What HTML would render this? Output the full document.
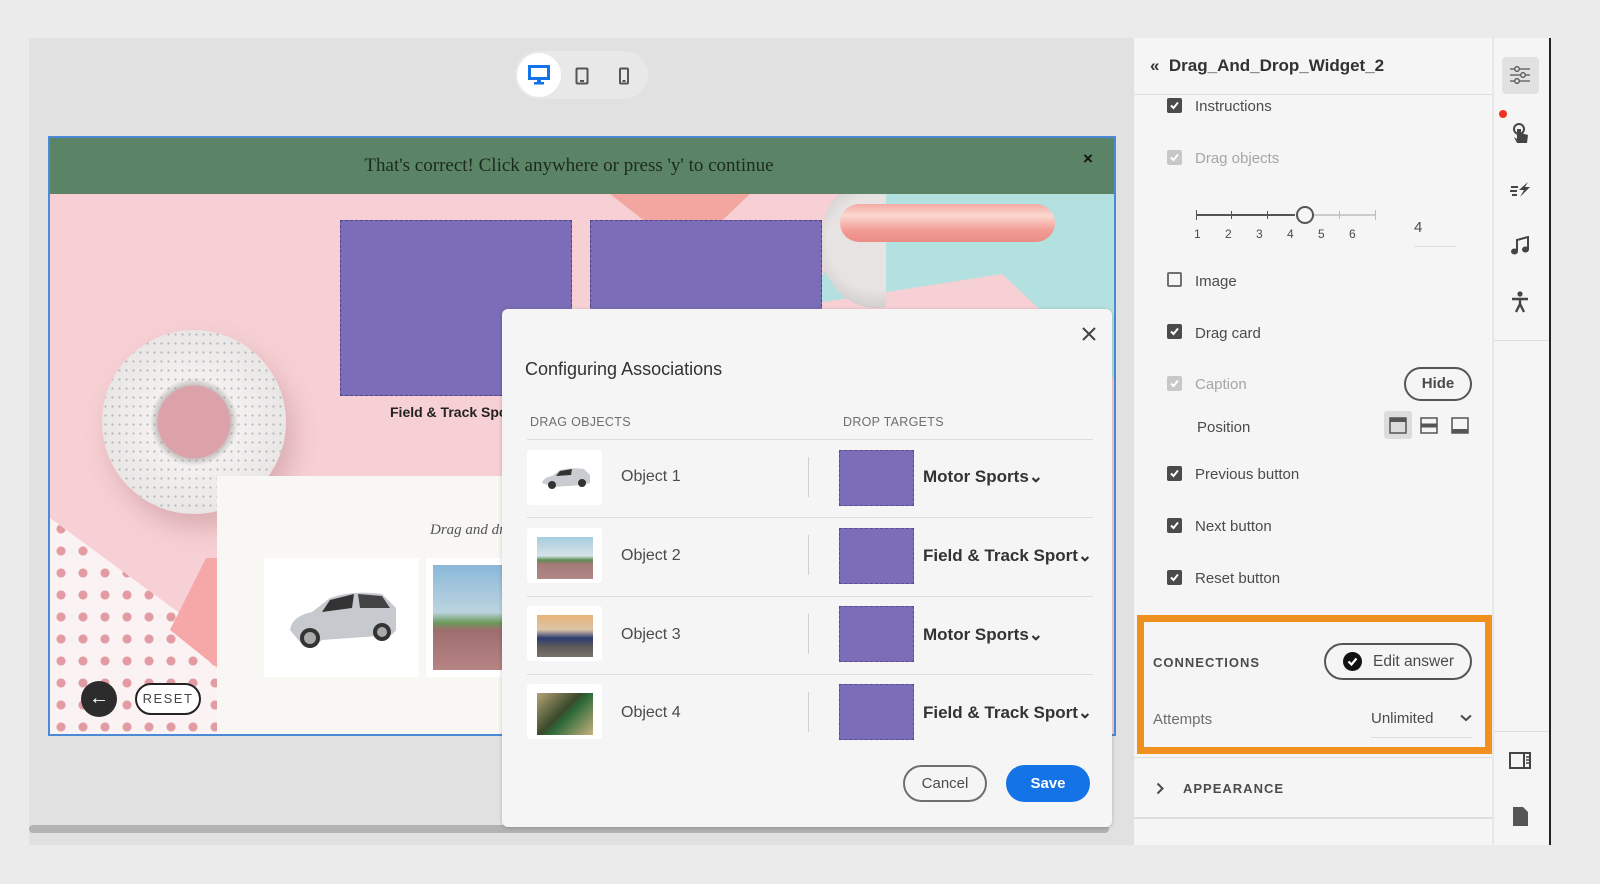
<!DOCTYPE html>
<html><head><meta charset="utf-8"><style>
*{box-sizing:border-box;margin:0;padding:0}
body{width:1600px;height:884px;background:#ebebeb;position:relative;overflow:hidden;font-family:"Liberation Sans",sans-serif;color:#323232}
.abs{position:absolute}
.sb{font-family:"Liberation Sans",sans-serif;font-size:15px;color:#4b4b4b}
.cb{position:absolute;width:15px;height:15px;border-radius:2px;background:#4b4b4b}
.cb svg{position:absolute;left:2px;top:2px}
.cb.dis{background:#c8c8c8}
.cb.off{background:transparent;border:2px solid #707070}
.row{position:absolute;left:527px;width:566px;height:1px;background:#dcdcdc}
.thumb{position:absolute;left:527px;width:75px;height:55px;background:#fff;border-radius:3px}
.objt{position:absolute;left:621px;font-size:16px;color:#4b4b4b}
.vs{position:absolute;left:808px;width:1px;height:40px;background:#d0d0d0}
.tgt{position:absolute;left:839px;width:75px;height:56px;background:#7b6db7;border:1px dashed #5a4c92}
.tgtt{position:absolute;left:923px;font-size:17px;font-weight:bold;color:#333}
</style></head><body>
<div class="abs" style="left:29px;top:38px;width:1105px;height:807px;background:#e1e1e1"></div>
<div class="abs" style="left:515px;top:51px;width:133px;height:48px;border-radius:24px;background:#e8e8e8"></div>
<div class="abs" style="left:517px;top:53px;width:44px;height:44px;border-radius:22px;background:#fff"></div>
<svg class="abs" style="left:528px;top:65px" width="22" height="20" viewBox="0 0 22 20"><rect x="1.5" y="1.5" width="19" height="12" fill="none" stroke="#1473e6" stroke-width="3"/><rect x="9" y="14" width="4" height="3" fill="#1473e6"/><rect x="6" y="17" width="10" height="2.5" fill="#1473e6"/></svg>
<svg class="abs" style="left:575px;top:67px" width="14" height="18" viewBox="0 0 14 18"><rect x="1.5" y="1.5" width="11" height="15" rx="1" fill="none" stroke="#555" stroke-width="2"/><rect x="5" y="13" width="4" height="2" fill="#555"/></svg>
<svg class="abs" style="left:619px;top:67px" width="10" height="18" viewBox="0 0 10 18"><rect x="1" y="1.5" width="8" height="15" rx="1" fill="none" stroke="#555" stroke-width="2"/><rect x="3.5" y="13" width="3" height="2" fill="#555"/></svg>

<div class="abs" style="left:48px;top:136px;width:1068px;height:600px;border:2px solid #4a8ad8;background:#f6d0d4;overflow:hidden">
  <div class="abs" style="left:760px;top:56px;width:320px;height:200px;background:#b3e1df;clip-path:polygon(15% 0,100% 0,100% 100%,60% 40%,0 55%)"></div>
  <div class="abs" style="left:560px;top:56px;width:140px;height:60px;background:#f3a59f;clip-path:polygon(0 0,100% 0,55% 100%)"></div>
  <div class="abs" style="left:770px;top:40px;width:110px;height:130px;border-radius:50%;background:radial-gradient(circle,#e7e3e3 55%,#bdb8b8);clip-path:inset(0 40% 0 0)"></div>
  <div class="abs" style="left:790px;top:66px;width:215px;height:38px;border-radius:19px;background:linear-gradient(#f3aaa4,#fbd8d0 30%,#f29b94 70%,#ea8c86)"></div>
  <div class="abs" style="left:52px;top:192px;width:184px;height:184px;border-radius:50%;background:radial-gradient(circle,#dba3a9 0 36px,#c9c4c4 37px,#f3f0f0 44px,#e8e5e5 75%,#bfbaba 92px);box-shadow:8px 14px 24px rgba(170,110,115,.35)"></div>
  <div class="abs" style="left:52px;top:192px;width:184px;height:184px;border-radius:50%;background-image:radial-gradient(circle,#888 0.8px,transparent 1.4px);background-size:7px 9px;opacity:.5;-webkit-mask:radial-gradient(circle,transparent 37px,#000 38px);mask:radial-gradient(circle,transparent 37px,#000 38px)"></div>
  <div class="abs" style="left:0;top:380px;width:180px;height:220px;background-color:#fbf2f3;background-image:radial-gradient(circle,#e29aa3 4px,transparent 5px);background-size:22px 22px;clip-path:polygon(0 0,100% 60%,100% 100%,0 100%)"></div>
  <div class="abs" style="left:120px;top:420px;width:60px;height:120px;background:#f6a8a8;clip-path:polygon(60% 0,100% 0,100% 100%,0 60%)"></div>
  <div class="abs" style="left:0;top:0;width:1068px;height:56px;background:#5a8465;font-family:'Liberation Serif',serif;font-size:19px;color:#1c2a1f;text-align:center;line-height:56px;padding-right:30px">That's correct! Click anywhere or press 'y' to continue</div>
  <div class="abs" style="left:1033px;top:11px;font-size:17px;color:#111;font-weight:bold">×</div>
  <div class="abs" style="left:290px;top:82px;width:232px;height:176px;background:#7b6db7;border:1px dashed #4f4286"></div>
  <div class="abs" style="left:540px;top:82px;width:232px;height:176px;background:#7b6db7;border:1px dashed #4f4286"></div>
  <div class="abs" style="left:340px;top:266px;font-size:14px;font-weight:bold;color:#222">Field &amp; Track Sports</div>
  <div class="abs" style="left:167px;top:338px;width:400px;height:262px;background:#f8f7f4"></div>
  <div class="abs" style="left:380px;top:384px;font-family:'Liberation Serif',serif;font-style:italic;font-size:15px;color:#555">Drag and drop</div>
  <div class="abs" style="left:214px;top:420px;width:155px;height:119px;background:#fff"></div>
  <svg class="abs" style="left:232px;top:440px" width="120" height="80" viewBox="0 0 120 80"><path d="M8 52 Q10 38 30 34 L48 20 Q70 12 100 16 L114 30 L114 52 Q110 60 96 58 L40 62 Q30 72 18 64 Z" fill="#c6c9ce"/><path d="M48 22 L72 16 L70 30 L40 34 Z" fill="#333"/><path d="M76 16 L100 18 L108 30 L78 30 Z" fill="#444"/><circle cx="28" cy="60" r="10" fill="#333"/><circle cx="28" cy="60" r="6" fill="#aaa"/><circle cx="100" cy="54" r="9" fill="#333"/><circle cx="100" cy="54" r="5" fill="#aaa"/></svg>
  <div class="abs" style="left:376px;top:420px;width:80px;height:119px;background:#fff"></div>
  <div class="abs" style="left:383px;top:427px;width:80px;height:105px;background:linear-gradient(#8ab8d8 0,#bcd4e0 45%,#6a9a5a 55%,#9e6e6e 62%,#b78484)"></div>
  <div class="abs" style="left:31px;top:543px;width:36px;height:36px;border-radius:50%;background:#2c2c2c;color:#fff;font-size:20px;text-align:center;line-height:34px">←</div>
  <div class="abs" style="left:85px;top:545px;width:66px;height:32px;border-radius:16px;border:2px solid #222;background:#fff;font-size:13px;letter-spacing:1.5px;text-align:center;line-height:28px;color:#444">RESET</div>
</div>

<div class="abs" style="left:29px;top:825px;width:1080px;height:8px;border-radius:4px;background:#b3b3b3"></div>

<div class="abs" style="left:502px;top:309px;width:610px;height:518px;background:#f5f5f5;border-radius:6px;box-shadow:0 1px 4px rgba(0,0,0,.2)"></div>
<svg class="abs" style="left:1081px;top:326px" width="16" height="16" viewBox="0 0 16 16"><path d="M2 2L14 14M14 2L2 14" stroke="#444" stroke-width="2"/></svg>
<div class="abs" style="left:525px;top:359px;font-size:18px;color:#323232">Configuring Associations</div>
<div class="abs" style="left:530px;top:415px;font-size:12.5px;color:#6e6e6e;letter-spacing:.3px">DRAG OBJECTS</div>
<div class="abs" style="left:843px;top:415px;font-size:12.5px;color:#6e6e6e;letter-spacing:.3px">DROP TARGETS</div>
<div class="row" style="top:439px"></div>
<div class="row" style="top:517px"></div>
<div class="row" style="top:596px"></div>
<div class="row" style="top:674px"></div>

<div class="thumb" style="top:450px"></div>
<svg class="abs" style="left:540px;top:465px" width="52" height="26" viewBox="0 0 52 26"><path d="M2 18 Q4 12 12 11 L20 5 Q32 2 44 4 L50 10 L50 18 L42 20 L14 22 Z" fill="#c9ccd0"/><path d="M20 6 L32 4 L31 10 L16 11Z" fill="#333"/><circle cx="12" cy="20" r="4" fill="#333"/><circle cx="42" cy="18" r="4" fill="#333"/></svg>
<div class="thumb" style="top:528px"></div>
<div class="abs" style="left:537px;top:537px;width:56px;height:42px;background:linear-gradient(#a7cde0,#d6e2e6 45%,#5d8c52 55%,#a57b78 65%,#b18886)"></div>
<div class="thumb" style="top:606px"></div>
<div class="abs" style="left:537px;top:615px;width:56px;height:42px;background:linear-gradient(#e8b47a,#dcc4a8 35%,#2b3d6e 55%,#5d5a5a 75%,#7a746c)"></div>
<div class="thumb" style="top:684px"></div>
<div class="abs" style="left:537px;top:693px;width:56px;height:42px;background:linear-gradient(135deg,#b5a377,#3a4a2a 45%,#2c6a3a 55%,#c9b07e)"></div>

<div class="objt" style="top:468px">Object 1</div>
<div class="objt" style="top:547px">Object 2</div>
<div class="objt" style="top:626px">Object 3</div>
<div class="objt" style="top:704px">Object 4</div>
<div class="vs" style="top:457px"></div><div class="vs" style="top:535px"></div><div class="vs" style="top:614px"></div><div class="vs" style="top:692px"></div>
<div class="tgt" style="top:450px"></div><div class="tgt" style="top:528px"></div><div class="tgt" style="top:606px"></div><div class="tgt" style="top:684px"></div>
<div class="tgtt" style="top:467px">Motor Sports⌄</div>
<div class="tgtt" style="top:546px">Field &amp; Track Sport⌄</div>
<div class="tgtt" style="top:625px">Motor Sports⌄</div>
<div class="tgtt" style="top:703px">Field &amp; Track Sport⌄</div>
<div class="abs" style="left:903px;top:765px;width:84px;height:37px;border:2px solid #6e6e6e;border-radius:19px;text-align:center;line-height:33px;font-size:15px;color:#4b4b4b">Cancel</div>
<div class="abs" style="left:1006px;top:765px;width:84px;height:37px;background:#1473e6;border-radius:19px;text-align:center;line-height:37px;font-size:15px;color:#fff;font-weight:bold">Save</div>

<div class="abs" style="left:1134px;top:38px;width:358px;height:807px;background:#f5f5f5"></div>
<div class="abs" style="left:1134px;top:94px;width:358px;height:1px;background:#dedede"></div>
<div class="abs" style="left:1150px;top:56px;font-size:17px;font-weight:bold;color:#323232">«&nbsp;&nbsp;Drag_And_Drop_Widget_2</div>

<div class="cb" style="left:1167px;top:98px"><svg width="11" height="11"><path d="M2 5.5L4.5 8L9 2.5" stroke="#fff" stroke-width="2" fill="none"/></svg></div>
<div class="abs sb" style="left:1195px;top:98px">Instructions</div>
<div class="cb dis" style="left:1167px;top:150px"><svg width="11" height="11"><path d="M2 5.5L4.5 8L9 2.5" stroke="#fff" stroke-width="2" fill="none"/></svg></div>
<div class="abs sb" style="left:1195px;top:150px;color:#a6a6a6">Drag objects</div>
<div class="abs" style="left:1196px;top:214px;width:99px;height:2px;background:#555"></div>
<div class="abs" style="left:1313px;top:214px;width:63px;height:2px;background:#ccc"></div>
<div class="abs" style="left:1296px;top:206px;width:18px;height:18px;border-radius:50%;border:2px solid #555;background:#f5f5f5"></div>
<div class="abs" style="left:1196px;top:210px;width:1px;height:10px;background:#555"></div>
<div class="abs" style="left:1231px;top:211px;width:1px;height:8px;background:#555"></div>
<div class="abs" style="left:1267px;top:211px;width:1px;height:8px;background:#555"></div>
<div class="abs" style="left:1339px;top:211px;width:1px;height:8px;background:#bbb"></div>
<div class="abs" style="left:1375px;top:210px;width:1px;height:10px;background:#bbb"></div>
<div class="abs" style="left:1194px;top:227px;font-size:12px;color:#4b4b4b;word-spacing:21px">1 2 3 4 5 6</div>
<div class="abs sb" style="left:1414px;top:219px">4</div>
<div class="abs" style="left:1414px;top:246px;width:42px;height:1px;background:#ddd"></div>

<div class="cb off" style="left:1167px;top:272px"></div>
<div class="abs sb" style="left:1195px;top:273px">Image</div>
<div class="cb" style="left:1167px;top:324px"><svg width="11" height="11"><path d="M2 5.5L4.5 8L9 2.5" stroke="#fff" stroke-width="2" fill="none"/></svg></div>
<div class="abs sb" style="left:1195px;top:325px">Drag card</div>
<div class="cb dis" style="left:1167px;top:376px"><svg width="11" height="11"><path d="M2 5.5L4.5 8L9 2.5" stroke="#fff" stroke-width="2" fill="none"/></svg></div>
<div class="abs sb" style="left:1195px;top:376px;color:#a6a6a6">Caption</div>
<div class="abs" style="left:1404px;top:367px;width:68px;height:34px;border:2px solid #555;border-radius:17px;text-align:center;line-height:30px;font-size:15px;font-weight:bold;color:#4b4b4b">Hide</div>
<div class="abs sb" style="left:1197px;top:419px">Position</div>
<div class="abs" style="left:1384px;top:411px;width:28px;height:28px;border-radius:3px;background:#dcdcdc"></div>
<svg class="abs" style="left:1389px;top:417px" width="18" height="17"><rect x="1" y="1" width="16" height="15" fill="none" stroke="#555" stroke-width="1.5"/><rect x="1" y="1" width="16" height="4" fill="#555"/></svg>
<svg class="abs" style="left:1420px;top:417px" width="18" height="17"><rect x="1" y="1" width="16" height="15" fill="none" stroke="#555" stroke-width="1.5"/><rect x="1" y="6.5" width="16" height="4" fill="#555"/></svg>
<svg class="abs" style="left:1451px;top:417px" width="18" height="17"><rect x="1" y="1" width="16" height="15" fill="none" stroke="#555" stroke-width="1.5"/><rect x="1" y="12" width="16" height="4" fill="#555"/></svg>

<div class="cb" style="left:1167px;top:466px"><svg width="11" height="11"><path d="M2 5.5L4.5 8L9 2.5" stroke="#fff" stroke-width="2" fill="none"/></svg></div>
<div class="abs sb" style="left:1195px;top:466px">Previous button</div>
<div class="cb" style="left:1167px;top:518px"><svg width="11" height="11"><path d="M2 5.5L4.5 8L9 2.5" stroke="#fff" stroke-width="2" fill="none"/></svg></div>
<div class="abs sb" style="left:1195px;top:518px">Next button</div>
<div class="cb" style="left:1167px;top:570px"><svg width="11" height="11"><path d="M2 5.5L4.5 8L9 2.5" stroke="#fff" stroke-width="2" fill="none"/></svg></div>
<div class="abs sb" style="left:1195px;top:570px">Reset button</div>

<div class="abs" style="left:1137px;top:615px;width:355px;height:139px;border:7px solid #f0901e"></div>
<div class="abs" style="left:1153px;top:655px;font-size:13px;font-weight:bold;letter-spacing:1px;color:#4b4b4b">CONNECTIONS</div>
<div class="abs" style="left:1324px;top:643px;width:148px;height:37px;border:2px solid #555;border-radius:19px"></div>
<div class="abs" style="left:1343px;top:652px;width:19px;height:19px;border-radius:50%;background:#111"></div>
<svg class="abs" style="left:1346px;top:655px" width="13" height="13"><path d="M2.5 6.5L5.5 9.5L10.5 3.5" stroke="#fff" stroke-width="2.2" fill="none"/></svg>
<div class="abs" style="left:1373px;top:653px;font-size:15.5px;color:#4b4b4b">Edit answer</div>
<div class="abs sb" style="left:1153px;top:711px;color:#6e6e6e">Attempts</div>
<div class="abs sb" style="left:1371px;top:710px">Unlimited</div>
<svg class="abs" style="left:1460px;top:714px" width="12" height="8"><path d="M1 1.5L6 6L11 1.5" stroke="#4b4b4b" stroke-width="2" fill="none"/></svg>
<div class="abs" style="left:1371px;top:737px;width:101px;height:1px;background:#ddd"></div>
<div class="abs" style="left:1134px;top:757px;width:358px;height:1px;background:#dedede"></div>
<svg class="abs" style="left:1156px;top:782px" width="8" height="13"><path d="M1.5 1.5L6.5 6.5L1.5 11.5" stroke="#4b4b4b" stroke-width="2" fill="none"/></svg>
<div class="abs" style="left:1183px;top:781px;font-size:13px;font-weight:bold;letter-spacing:1px;color:#4b4b4b">APPEARANCE</div>
<div class="abs" style="left:1134px;top:817px;width:358px;height:2px;background:#dedede"></div>

<div class="abs" style="left:1493px;top:38px;width:58px;height:807px;background:#f5f5f5;border-left:1px solid #e3e3e3;border-right:2px solid #222"></div>
<div class="abs" style="left:1502px;top:57px;width:37px;height:37px;border-radius:4px;background:#e1e1e1"></div>
<svg class="abs" style="left:1509px;top:65px" width="22" height="20" viewBox="0 0 22 20"><path d="M1 4H21M1 10H21M1 16H21" stroke="#555" stroke-width="1.3"/><circle cx="8" cy="4" r="2.3" fill="#e1e1e1" stroke="#555" stroke-width="1.3"/><circle cx="14" cy="10" r="2.3" fill="#e1e1e1" stroke="#555" stroke-width="1.3"/><circle cx="8" cy="16" r="2.3" fill="#e1e1e1" stroke="#555" stroke-width="1.3"/></svg>
<div class="abs" style="left:1499px;top:110px;width:8px;height:8px;border-radius:50%;background:#e32"></div>
<svg class="abs" style="left:1511px;top:122px" width="20" height="22" viewBox="0 0 20 22"><circle cx="8" cy="7" r="5" fill="none" stroke="#444" stroke-width="2"/><path d="M6 7V17L3 15L6 21H16L17 13L10 11V7Z" fill="#444"/></svg>
<svg class="abs" style="left:1509px;top:181px" width="22" height="17" viewBox="0 0 22 17"><path d="M2 6H9M1 10H8M3 14H8" stroke="#444" stroke-width="2"/><path d="M19 1L10 9H15L11 16L21 6H16Z" fill="#444"/></svg>
<svg class="abs" style="left:1510px;top:236px" width="20" height="20" viewBox="0 0 20 20"><path d="M7 15V4L18 1V13" stroke="#444" stroke-width="2" fill="none"/><ellipse cx="4.5" cy="15.5" rx="3.5" ry="3" fill="#444"/><ellipse cx="15.5" cy="13.5" rx="3.5" ry="3" fill="#444"/></svg>
<svg class="abs" style="left:1511px;top:291px" width="18" height="22" viewBox="0 0 18 22"><circle cx="9" cy="3" r="2.6" fill="#444"/><path d="M1 8H17M9 7V13M9 13L5 21M9 13L13 21" stroke="#444" stroke-width="2.4" fill="none"/></svg>
<div class="abs" style="left:1494px;top:340px;width:55px;height:1px;background:#ddd"></div>
<div class="abs" style="left:1494px;top:731px;width:55px;height:1px;background:#ddd"></div>
<svg class="abs" style="left:1509px;top:752px" width="22" height="17"><rect x="1" y="1" width="20" height="15" fill="none" stroke="#444" stroke-width="2"/><path d="M15 1V16" stroke="#444" stroke-width="2"/><path d="M17 5H20M17 8H20M17 11H20" stroke="#444" stroke-width="1.5"/></svg>
<svg class="abs" style="left:1513px;top:807px" width="15" height="19"><path d="M0 0H10L15 5V19H0Z" fill="#555"/></svg>
<div class="abs" style="left:0;top:845px;width:1600px;height:39px;background:#ebebeb"></div>
</body></html>
